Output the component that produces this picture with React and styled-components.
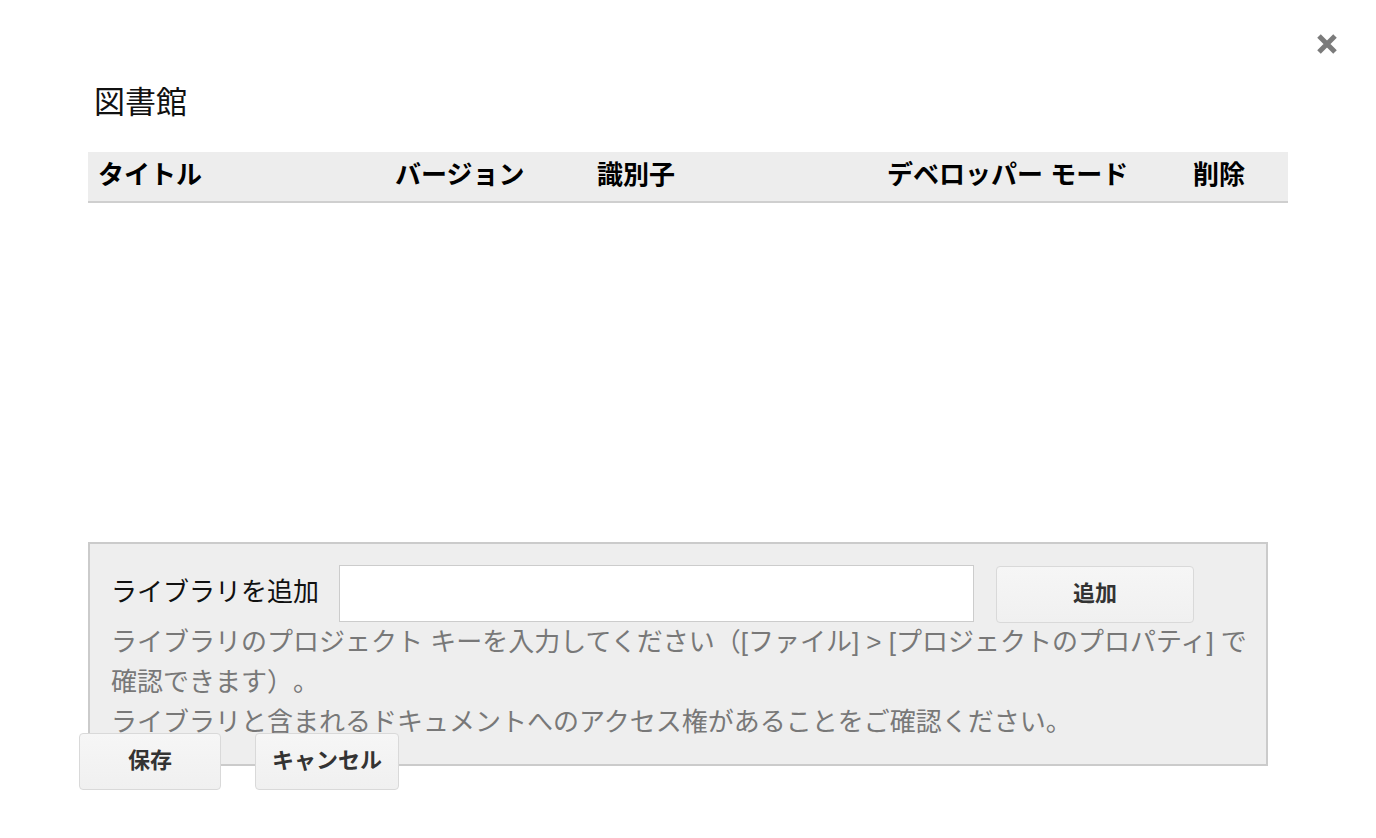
import React from "react";
import styled, { createGlobalStyle } from "styled-components";

const GlobalStyle = createGlobalStyle`
  html, body {
    margin: 0;
    padding: 0;
    background: #fff;
  }
  body {
    font-family: "Liberation Sans", "Noto Sans CJK JP", sans-serif;
    color: #000;
    text-spacing-trim: space-all;
  }
`;

const columns = [
  { label: "タイトル", width: "297px" },
  { label: "バージョン", width: "202px" },
  { label: "識別子", width: "290px" },
  { label: "デベロッパー モード", width: "306px" },
  { label: "削除", width: "1fr" },
];

function App() {
  return (
    <Page>
      <GlobalStyle />
      <CloseRow>
        <CloseButton aria-label="閉じる">
          <svg width="22" height="22" viewBox="0 0 22 22">
            <path
              d="M3 3 L19 19 M19 3 L3 19"
              stroke="#7b7b7b"
              strokeWidth="5"
              strokeLinecap="butt"
            />
          </svg>
        </CloseButton>
      </CloseRow>

      <Title>図書館</Title>

      <TableHead $cols={columns.map((c) => c.width).join(" ")}>
        {columns.map((c) => (
          <HeadCell key={c.label}>{c.label}</HeadCell>
        ))}
      </TableHead>

      <AddBox>
        <AddRow>
          <Label>ライブラリを追加</Label>
          <KeyInput type="text" />
          <Button $width="198px">追加</Button>
        </AddRow>
        <Help>
          ライブラリのプロジェクト キーを入力してください（[ファイル] &gt; [プロジェクトのプロパティ] で確認できます）。
        </Help>
        <Help>ライブラリと含まれるドキュメントへのアクセス権があることをご確認ください。</Help>
      </AddBox>

      <Actions>
        <Button $width="142px">保存</Button>
        <Button $width="144px">キャンセル</Button>
      </Actions>
    </Page>
  );
}

export default App;

const Page = styled.div`
  padding: 30px 0 0 88px;
  width: 1376px;
  box-sizing: border-box;
`;

const CloseRow = styled.div`
  display: flex;
  justify-content: flex-end;
  padding-right: 38px;
  height: 26px;
`;

const CloseButton = styled.div`
  width: 22px;
  height: 22px;
  margin-top: 3px;
  svg {
    display: block;
  }
`;

const Title = styled.h1`
  margin: 29px 0 0 6px;
  font-size: 31px;
  font-weight: normal;
  line-height: 36px;
  color: #111;
`;

const TableHead = styled.div`
  display: grid;
  grid-template-columns: ${(p) => p.$cols};
  width: 1200px;
  margin-top: 31px;
  padding-bottom: 3px;
  box-sizing: content-box;
  height: 46px;
  background: #ededed;
  border-bottom: 2px solid #cfcfcf;
  align-items: center;
`;

const HeadCell = styled.div`
  padding-left: 10px;
  font-size: 26px;
  font-weight: bold;
  line-height: 30px;
  white-space: nowrap;
`;

const AddBox = styled.div`
  margin-top: 339px;
  width: 1180px;
  box-sizing: border-box;
  background: #eeeeee;
  border: 2px solid #cbcbcb;
  padding: 20px 14px 22px 21px;
`;

const AddRow = styled.div`
  display: flex;
  align-items: center;
  height: 58px;
`;

const Label = styled.span`
  font-size: 26px;
  line-height: 30px;
  color: #111;
  margin: 0 20px 2px 0;
  white-space: nowrap;
`;

const KeyInput = styled.input`
  width: 635px;
  height: 57px;
  box-sizing: border-box;
  border: 1px solid #cccccc;
  background: #fff;
  margin: 0 22px 0 0;
  padding: 0 8px;
  font-size: 24px;
  outline: none;
`;

const Button = styled.button`
  width: ${(p) => p.$width};
  height: 57px;
  box-sizing: border-box;
  margin-top: 3px;
  border: 1.5px solid #d9d9d9;
  border-radius: 4px;
  background: linear-gradient(#f6f6f6, #f0f0f0);
  font-family: "Liberation Sans", "Noto Sans CJK JP", sans-serif;
  font-size: 22px;
  line-height: 26px;
  font-weight: bold;
  color: #333;
  padding: 0 0 1px;
`;

const Help = styled.p`
  margin: 0;
  font-size: 26px;
  line-height: 40px;
  color: #787878;
`;

const Actions = styled.div`
  display: flex;
  gap: 34px;
  margin: -36px 0 0 -9px;
`;
